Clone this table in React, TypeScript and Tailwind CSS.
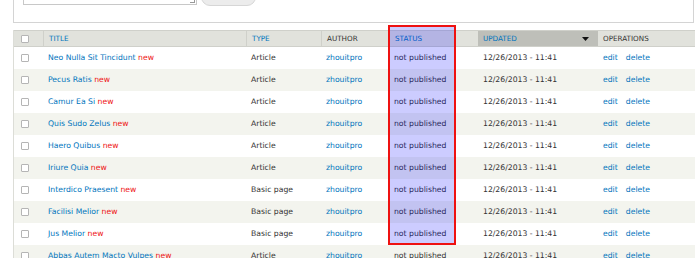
import React from "react";

const rows = [
  ["Neo Nulla Sit Tincidunt", "Article"],
  ["Pecus Ratis", "Article"],
  ["Camur Ea Si", "Article"],
  ["Quis Sudo Zelus", "Article"],
  ["Haero Quibus", "Article"],
  ["Iriure Quia", "Article"],
  ["Interdico Praesent", "Basic page"],
  ["Facilisi Melior", "Basic page"],
  ["Jus Melior", "Basic page"],
  ["Abbas Autem Macto Vulpes", "Article"],
];

const cols = "grid grid-cols-[29px_203px_75px_68px_89px_120px_95px]";

function Box() {
  return <div className="w-[8px] h-[8px] border border-[#b5b5b5] rounded-[1px] bg-white ml-[7px]" />;
}

export default function App() {
  return (
    <div className="relative w-[700px] h-[258px] overflow-hidden bg-white font-['DejaVu_Sans',sans-serif] text-[#333]">
      {/* top filter box */}
      <div className="ml-[13px] mr-[6px] -mt-[20px] h-[43px] border border-[#d4d4d4] flex items-end pb-[17px] pl-[9px] gap-[4px]">
        <div className="relative w-[174px] h-[20px] border border-[#c8c8c8] bg-white">
          <div className="absolute right-[1px] bottom-[1px] w-[5px] h-[5px] border-r border-b border-[#999]" />
        </div>
        <div className="w-[55px] h-[22px] -mb-[1px] rounded-[9px] border border-[#d6d6d6] bg-[#ececec] text-[8px] text-center leading-[14px] text-[#444]">
          Apply
        </div>
      </div>

      {/* table */}
      <div className="mt-[7px] ml-[13px] w-[682px] border-l border-[#dcddd7]">
        <div className={`${cols} h-[17px] bg-[#e1e2dc] border-y border-[#cfd0ca] text-[7.2px] leading-none items-stretch`}>
          <div className="flex items-center"><Box /></div>
          <div className="flex items-center pl-[5px] border-l border-[#cfd0ca] text-[#0074bd]">TITLE</div>
          <div className="flex items-center pl-[5px] border-l border-[#cfd0ca] text-[#0074bd]">TYPE</div>
          <div className="flex items-center pl-[5px] border-l border-[#cfd0ca] text-[#333]">AUTHOR</div>
          <div className="flex items-center pl-[5px] border-l border-[#cfd0ca] text-[#0074bd]">STATUS</div>
          <div className="flex items-center justify-between pl-[5px] pr-[9px] bg-[#bebfb9] text-[#0074bd]">
            <span>UPDATED</span>
            <svg width="7" height="4" viewBox="0 0 7 4"><path d="M0 0H7L3.5 4Z" fill="#111" /></svg>
          </div>
          <div className="flex items-center pl-[5px] text-[#333]">OPERATIONS</div>
        </div>
        {rows.map(([title, type], i) => (
          <div key={i} className={`${cols} h-[22px] items-center text-[7.7px] leading-none ${i % 2 === 1 ? "bg-[#f3f4ee]" : "bg-white"}`}>
            <div><Box /></div>
            <div className="pl-[5px] whitespace-nowrap">
              <span className="text-[#0074bd]">{title}</span> <span className="text-[#ee1111]">new</span>
            </div>
            <div className="pl-[5px]">{type}</div>
            <div className="pl-[5px] text-[#0074bd]">zhouitpro</div>
            <div className="pl-[5px]">not published</div>
            <div className="pl-[5px]">12/26/2013 - 11:41</div>
            <div className="pl-[5px] flex gap-[8px] text-[#0074bd]"><span>edit</span><span>delete</span></div>
          </div>
        ))}
      </div>

      {/* highlight overlay */}
      <div className="absolute left-[388px] top-[25px] w-[68px] h-[220px] border-2 border-[#ee1111] bg-[rgba(0,0,255,0.2)]" />
    </div>
  );
}
